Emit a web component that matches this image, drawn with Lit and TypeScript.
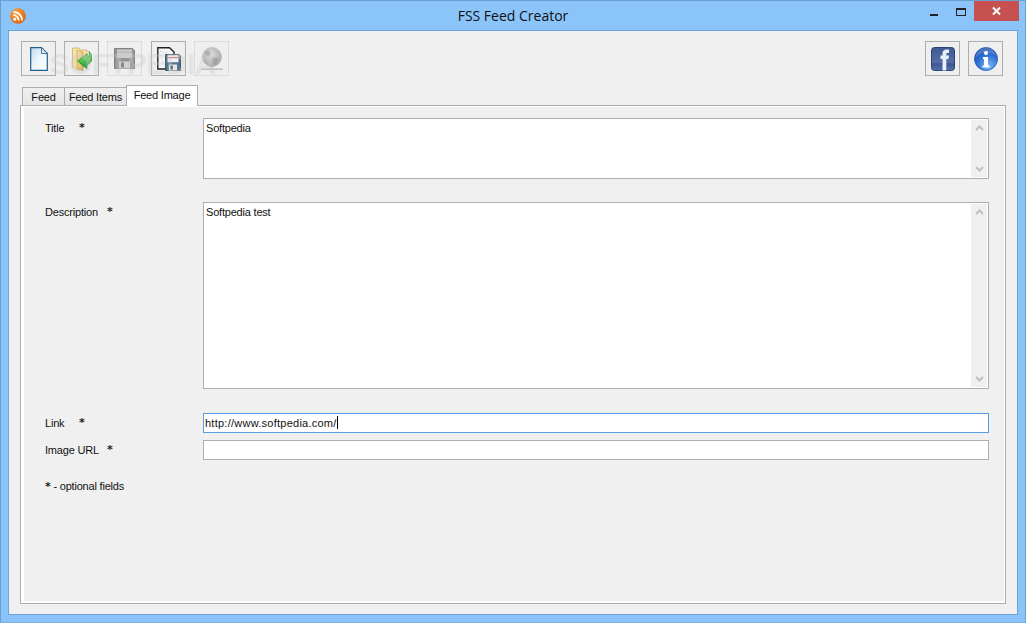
import { LitElement, html, css, svg } from "lit";
import { customElement } from "lit/decorators.js";

const defs = svg`<defs>
<linearGradient id="pg" x1="0" y1="0" x2="1" y2="1"><stop offset="0" stop-color="#bfd9ee"/><stop offset=".5" stop-color="#eef6fc"/><stop offset="1" stop-color="#ffffff"/></linearGradient>
<linearGradient id="fold" x1="0" y1="0" x2="1" y2="1"><stop offset="0" stop-color="#fbe9ae"/><stop offset="1" stop-color="#d6ad5c"/></linearGradient>
<linearGradient id="arr" x1="0" y1="0" x2="0" y2="1"><stop offset="0" stop-color="#a4ec86"/><stop offset="1" stop-color="#12962a"/></linearGradient>
<linearGradient id="fb" x1="0" y1="0" x2="0" y2="1"><stop offset="0" stop-color="#3d5a94"/><stop offset=".68" stop-color="#566fa6"/><stop offset=".7" stop-color="#3b5690"/><stop offset="1" stop-color="#5470a8"/></linearGradient>
<radialGradient id="inf" cx=".6" cy=".8" r=".9"><stop offset="0" stop-color="#7fbaf5"/><stop offset=".55" stop-color="#2b6fd2"/><stop offset="1" stop-color="#17409c"/></radialGradient>
<radialGradient id="glob" cx=".45" cy=".35" r=".7"><stop offset="0" stop-color="#d6d6d6"/><stop offset="1" stop-color="#8a8a8a"/></radialGradient>
<radialGradient id="rss" cx=".35" cy=".3" r=".8"><stop offset="0" stop-color="#f7a64a"/><stop offset="1" stop-color="#d85f0a"/></radialGradient>
</defs>`;

const icons = {
  page: svg`<svg viewBox="0 0 18 24" width="18" height="24">
    <path d="M.7 .7H11.5L17.3 6.5V23.3H.7Z" fill="url(#pg)" stroke="#1f5f8f" stroke-width="1.2"/>
    <path d="M11.5 .7V6.5H17.3Z" fill="#dfeaf4" stroke="#1f5f8f" stroke-width=".8"/></svg>`,
  open: svg`<svg viewBox="0 0 20 24" width="20" height="24">
    <path d="M.5 1H7L8.5 3H15V19H7V23.5L.5 20Z" fill="#f7e2a0" stroke="#c0a050" stroke-width=".6"/>
    <path d="M5 3L11 5.5V24L5 21Z" fill="url(#fold)" stroke="#b08d44" stroke-width=".6"/>
    <path d="M17 4.5C22 9.5 20.5 15.5 15 18V22L5.5 14L15 7V11.5C17 10.5 18 8 17 4.5Z" fill="url(#arr)" stroke="#17852c" stroke-width=".7"/></svg>`,
  save: svg`<svg viewBox="0 0 21 21" width="21" height="21">
    <path d="M.5 .5H18.5L20.5 2.5V20.5H.5Z" fill="#767676" stroke="#5f5f5f"/>
    <rect x="3" y="1.5" width="15" height="8.5" fill="#c2c2c2"/><rect x="3" y="3.5" width="15" height="1" fill="#999"/>
    <rect x="5" y="13.5" width="11" height="7" fill="#c6c6c6"/><rect x="7" y="14.5" width="3" height="5" fill="#666"/></svg>`,
  saveas: svg`<svg viewBox="0 0 24 24" width="24" height="24">
    <path d="M.8 .8H12.5L17 5V22H.8Z" fill="#f6f6f6" stroke="#222" stroke-width="1.4"/>
    <path d="M3 4L12 6M3 8L8 19" stroke="#b5b5b5" stroke-dasharray="1 2" fill="none"/>
    <path d="M8.5 7.5H22L23.5 9V23.5H8.5Z" fill="#53758c" stroke="#2f4350" stroke-width=".8"/>
    <rect x="10.5" y="8.2" width="11" height="7" fill="#f1f4f6"/>
    <rect x="10.5" y="10" width="11" height="1.2" fill="#d8777a"/>
    <rect x="12" y="17.5" width="8" height="6" fill="#e3e7ea"/>
    <rect x="13.5" y="18.5" width="2.2" height="4" fill="#2f3f4b"/></svg>`,
  globe: svg`<svg viewBox="0 0 24 24" width="24" height="24">
    <circle cx="12" cy="10" r="9.6" fill="url(#glob)" stroke="#9a9a9a" stroke-width=".5"/>
    <path d="M5 5C9 2 12 6 10 8S5 10 5 5ZM13 11C18 9 20 12 17 16S12 15 13 11Z" fill="#6a6a6a" opacity=".45"/>
    <rect x="11" y="19.5" width="2" height="2" fill="#a5a5a5"/><rect x="1" y="21.5" width="22" height="1.4" fill="#a8a8a8"/></svg>`,
  fb: svg`<svg viewBox="0 0 24 24" width="24" height="24">
    <rect x=".5" y=".5" width="23" height="23" rx="3" fill="url(#fb)" stroke="#2c4272"/>
    <path d="M11.5 23.5V12H9.5V8.5H11.5V6.5C11.5 3.5 13.5 2.5 15.5 2.5H18V6H16.5C15.5 6 15.3 6.5 15.3 7.2V8.5H18L17.5 12H15.3V23.5Z" fill="#e9eef8"/></svg>`,
  info: svg`<svg viewBox="0 0 24 24" width="24" height="24">
    <circle cx="12" cy="12" r="11.5" fill="url(#inf)" stroke="#1c4aa5" stroke-width=".7"/>
    <path d="M1.5 11C5 5 16 3 22.5 9C21 3 16 .8 12 .8C6 .8 2 5 1.5 11Z" fill="#fff" opacity=".2"/>
    <circle cx="12" cy="6" r="2.1" fill="#fff"/>
    <path d="M9 10H14V18.5H15.5V20.5H8.5V18.5H10V12H9Z" fill="#fff"/></svg>`,
  rss: svg`<svg viewBox="0 0 16 16" width="16" height="16">
    <circle cx="8" cy="8" r="7.8" fill="url(#rss)"/>
    <circle cx="4.8" cy="11.2" r="1.5" fill="#fff"/>
    <path d="M3.4 7.2A5.4 5.4 0 0 1 8.8 12.6M3.4 3.9A8.7 8.7 0 0 1 12.1 12.6" fill="none" stroke="#fff" stroke-width="1.7"/></svg>`,
};

@customElement("app-root")
export class AppRoot extends LitElement {
  static styles = css`
    :host {
      display: flex;
      flex-direction: column;
      box-sizing: border-box;
      width: 1026px;
      height: 623px;
      background: #8bc4f9;
      border: 1px solid #6b9fd0;
      border-bottom-color: #7fb3e4;
      font-family: "Liberation Sans", "Open Sans", sans-serif;
      font-size: 11px;
      letter-spacing: -0.2px;
      color: #111;
      position: relative;
      overflow: hidden;
    }
    .titlebar { height: 29px; display: flex; align-items: flex-start; position: relative; flex: none; }
    .appicon { margin: 7px 0 0 9px; height: 16px; }
    .title {
      position: absolute;
      left: 0;
      right: 0;
      top: 5px;
      text-align: center;
      font-family: "Open Sans", sans-serif;
      font-size: 14px;
      line-height: 19px;
      letter-spacing: 0;
      color: #111;
    }
    .controls { margin-left: auto; display: flex; align-items: flex-start; margin-right: 6px; }
    .ctl { width: 26px; height: 20px; position: relative; }
    .min::after { content: ""; position: absolute; left: 8px; top: 13px; width: 8px; height: 2px; background: #222; }
    .max::after { content: ""; position: absolute; left: 8px; top: 7px; width: 8px; height: 5px; border: 1px solid #222; border-top-width: 2px; }
    .close { width: 45px; background: #c75050; display: flex; justify-content: center; align-items: center; }
    .client {
      flex: 1;
      margin: 0 7px 7px 7px;
      background: #f0f0f0;
      border: 1px solid #6fa4d6;
      display: flex;
      flex-direction: column;
      padding: 10px 11px;
      position: relative;
      min-height: 0;
    }
    .toolbar { display: flex; height: 35px; flex: none; margin: 0 3px 0 1px; }
    .btn {
      box-sizing: border-box;
      width: 35px;
      height: 35px;
      border: 1px solid #adadad;
      background: #efefef;
      display: flex;
      align-items: center;
      justify-content: center;
      margin-right: 8px;
    }
    .btn.gap9 { margin-right: 9px; }
    .btn.off { border-color: #dcdcdc; }
    .btn.off svg { opacity: 0.75; }
    .spacer { flex: 1; }
    .btn.last { margin-right: 0; }
    .tabs { display: flex; margin: 8px 0 0 1px; height: 21px; align-items: flex-end; flex: none; position: relative; z-index: 1; }
    .tab {
      box-sizing: border-box;
      height: 18px;
      border: 1px solid #adadad;
      border-bottom: none;
      background: linear-gradient(#f0f0f0, #e5e5e5);
      line-height: 18px;
      text-align: center;
      margin-right: -1px;
    }
    .tab.f { width: 43px; margin-left: 1px; }
    .tab.fi { width: 63px; }
    .tab.on { width: 72px; background: #fff; line-height: 18px; margin-bottom: -1px; height: 21px; position: relative; }
    .panel {
      flex: 1;
      border: 1px solid #adadad;
      background: #f0f0f0;
      box-shadow: inset 3px 0 0 #fff, inset -1px 0 0 #fff, inset 0 -2px 0 #fff, inset 0 1px 0 #fff;
      padding: 12px 16px 0 24px;
      display: flex;
      flex-direction: column;
      min-height: 0;
    }
    .row { display: flex; align-items: flex-start; }
    .lbl { width: 158px; flex: none; display: flex; line-height: 14px; padding-top: 3px; }
    .lbl .t { display: block; }
    .lbl .t.s { width: 34px; }
    .lbl .t.l { width: 62px; }
    .star { font-family: "DejaVu Sans", sans-serif; font-weight: 700; font-size: 11px; line-height: 14px; color: #222; }
    .field {
      box-sizing: border-box;
      flex: 1;
      background: #fff;
      border: 1px solid #abadb3;
      position: relative;
      padding: 2px;
      line-height: 14px;
    }
    .area { padding-right: 20px; }
    .h61 { height: 61px; }
    .h187 { height: 187px; }
    .single { height: 20px; padding: 2px 1px; letter-spacing: 0.25px; }
    .focus { border-color: #569de5; }
    .caret { display: inline-block; width: 1px; height: 13px; background: #000; vertical-align: -2px; }
    .sb {
      position: absolute;
      top: 1px;
      right: 1px;
      bottom: 1px;
      width: 16px;
      background: #f0f0f0;
      display: flex;
      flex-direction: column;
      justify-content: space-between;
      align-items: center;
      padding: 5px 0;
      box-sizing: border-box;
    }
    .gap24 { margin-top: 23px; }
    .gap25 { margin-top: 24px; }
    .gap7 { margin-top: 7px; }
    .note { margin-top: 19px; line-height: 14px; }
    .watermark {
      position: absolute;
      left: 41px;
      top: 18px;
      font-family: "Liberation Sans", sans-serif;
      font-weight: 700;
      font-size: 29px;
      line-height: 30px;
      letter-spacing: 0;
      color: rgba(255, 255, 255, 0.3);
      text-shadow: 0 0 1px rgba(0, 0, 0, 0.1);
      pointer-events: none;
    }
  `;

  private scrollbar() {
    return html`<div class="sb">
      <svg width="9" height="6" viewBox="0 0 9 6"><path d="M1 5L4.5 1.5L8 5" fill="none" stroke="#c0c0c0" stroke-width="2"/></svg>
      <svg width="9" height="6" viewBox="0 0 9 6"><path d="M1 1L4.5 4.5L8 1" fill="none" stroke="#c0c0c0" stroke-width="2"/></svg>
    </div>`;
  }

  private label(text: string, size: "s" | "l") {
    return html`<div class="lbl"><span class="t ${size}">${text}</span><span class="star">*</span></div>`;
  }

  render() {
    return html`
      <svg width="0" height="0" style="position:absolute">${defs}</svg>
      <div class="titlebar">
        <div class="appicon">${icons.rss}</div>
        <div class="title">FSS Feed Creator</div>
        <div class="controls">
          <div class="ctl min"></div>
          <div class="ctl max"></div>
          <div class="ctl close">
            <svg width="9" height="8" viewBox="0 0 9 8"><path d="M1 .5L8 7.5M8 .5L1 7.5" stroke="#fff" stroke-width="2"/></svg>
          </div>
        </div>
      </div>
      <div class="client">
        <div class="toolbar">
          <div class="btn">${icons.page}</div>
          <div class="btn">${icons.open}</div>
          <div class="btn gap9 off">${icons.save}</div>
          <div class="btn">${icons.saveas}</div>
          <div class="btn off">${icons.globe}</div>
          <div class="spacer"></div>
          <div class="btn">${icons.fb}</div>
          <div class="btn last">${icons.info}</div>
        </div>
        <div class="tabs">
          <div class="tab f">Feed</div>
          <div class="tab fi">Feed Items</div>
          <div class="tab on">Feed Image</div>
        </div>
        <div class="panel">
          <div class="row">
            ${this.label("Title", "s")}
            <div class="field area h61">Softpedia${this.scrollbar()}</div>
          </div>
          <div class="row gap24">
            ${this.label("Description", "l")}
            <div class="field area h187">Softpedia test${this.scrollbar()}</div>
          </div>
          <div class="row gap25">
            ${this.label("Link", "s")}
            <div class="field single focus">http://www.softpedia.com/<span class="caret"></span></div>
          </div>
          <div class="row gap7">
            ${this.label("Image URL", "l")}
            <div class="field single"></div>
          </div>
          <div class="note"><span class="star">*</span> - optional fields</div>
        </div>
        <div class="watermark">SOFTPEDIA</div>
      </div>
    `;
  }
}
